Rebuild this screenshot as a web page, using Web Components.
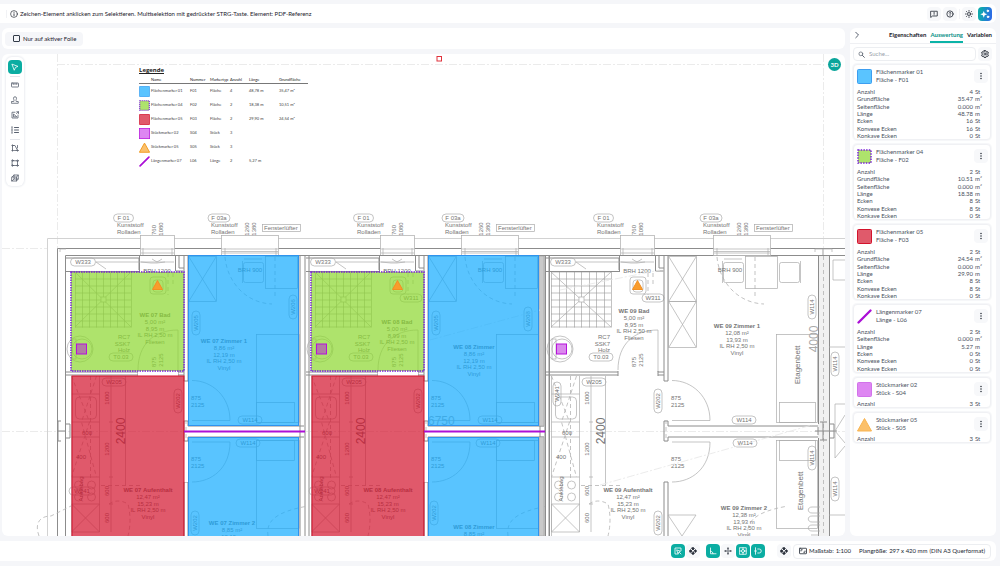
<!DOCTYPE html>
<html lang="de">
<head>
<meta charset="utf-8">
<meta name="viewport" content="width=device-width, initial-scale=1">
<title>Planauswertung</title>
<style>
  body { margin: 0; background: #f5f6f9; color: #4a515e; font: 6px/8px Lato, "Open Sans", sans-serif; }
</style>
</head>
<body>
<plan-app></plan-app>
<script>
const svg = (body, size = 8) => `<svg viewBox="0 0 16 16" width="${size}" height="${size}" fill="none" stroke="currentColor" stroke-width="1.6" stroke-linecap="round" stroke-linejoin="round" aria-hidden="true">${body}</svg>`;
const four = '<path d="M8 .5l2.7 2.8L8 6 5.300 3.300zM8 10l2.700 2.700L8 15.500l-2.700-2.800zM.5 8l2.800-2.700L6 8l-2.700 2.700zM10 8l2.700-2.700L15.500 8l-2.800 2.700z" fill="currentColor"/>';
const ICONS = {
  info: '<circle cx="8" cy="8" r="6.800" stroke-width="1.300"/><path d="M8 7.500v4M8 4.500v.3"/>',
  feedback: '<path d="M2 2.500h12.500v9.500H5L2 14.500zM8.200 4.500v3M8.200 9.600v.2"/>',
  help: '<circle cx="8" cy="8" r="6.300"/><path d="M6.300 6.300c.2-2.500 3.500-2 3.400 0C9.600 7.600 8.100 7.600 8.100 9M8.100 11.300v.2"/>',
  sun: '<circle cx="8" cy="8" r="3"/><path d="M8 .8v1.700M8 13.500v1.700M.8 8h1.700M13.500 8h1.700M2.900 2.900l1.200 1.200M11.900 11.900l1.200 1.200M2.900 13.100l1.200-1.200M11.900 4.100l1.200-1.200"/>',
  spark: '<path d="M6 3L7.500 6.800 11.500 8.300 7.500 9.800 6 14 4.500 9.800.5 8.300 4.500 6.800z" fill="currentColor" stroke="none"/><circle cx="12.500" cy="3" r="1.300" fill="currentColor"/><circle cx="12.800" cy="12.500" r="1.300" fill="currentColor"/>',
  cursor: '<path d="M2.500 2.500l11.500 4.300-5 2-2.200 5z"/>',
  ruler: '<rect x="1" y="4" width="14" height="8" rx="1"/><path d="M4.500 4.500v2.500M8 4.500v2.500M11.500 4.500v2.500"/>',
  stamp: '<path d="M1.500 14.500h13v-3.500H10.500C9 8 11 7 11 4.500a3 3 0 0 0-6 0C5 7 7 8 5.500 11h-4z"/>',
  areaicon: '<path d="M14 8v6H2V2.500h6M5 11V6l6 5zM11 5l4-3.500M11.500 1.500H15V5"/>',
  list: '<path d="M7 3h8M7 8h8M7 13h8M2 1.500v3M2 6.500v3M2 11.500v3" stroke-width="2"/>',
  polyline: '<path d="M3 13V3h5l5 10H7"/><circle cx="3" cy="3" r="1.300"/><circle cx="13" cy="13" r="1.300"/><circle cx="3" cy="13" r="1.300"/><path d="M13 3v5"/>',
  polygon: '<path d="M3 3.500h10v9.500H3z"/><circle cx="3" cy="3" r="1.500"/><circle cx="13" cy="3.500" r="1.500"/><circle cx="3" cy="13" r="1.500"/><circle cx="13" cy="13" r="1.500"/>',
  cube: '<path d="M2 6l4-4h8.500v8L11 14H2zM2 6h9v8M11 6l3.500-4M6 2v8h8M2 14l4-4"/>',
  chevron: '<path d="M5.500 2.500L11 8l-5.500 5.500" stroke-width="2"/>',
  search: '<circle cx="6.500" cy="6.500" r="4.300"/><path d="M10 10l4.500 4.500" stroke-width="2.200"/>',
  gear: '<circle cx="8" cy="8" r="2.200"/><path d="M6.500 1.300h3l.5 2 1.500.8 2-.6 1.400 2.500-1.400 1.500v1.300l1.400 1.500-1.400 2.500-2-.6-1.500.8-.5 2h-3l-.5-2-1.500-.8-2 .6-1.400-2.500 1.400-1.500V7.500L1.100 6l1.400-2.500 2 .6L6 3.300z" stroke-width="2"/>',
  dots: '<path d="M8 3v.1M8 8v.1M8 13v.1" stroke-width="3"/>',
  select: '<path d="M14 7V2H2v12h6M6 6l7 2.500-3 1.500-1.500 3z"/><path d="M11 11l3 3"/>',
  four,
  angle: '<path d="M3 2v11.500h11M3 8.500c3 0 5 2 5 5"/>',
  cross: '<path d="M8 0l2 3.500H6zM8 16l-2-3.500h4zM0 8l3.500-2v4zM16 8l-3.500 2V6z" fill="currentColor" stroke="none"/><path d="M8 4v2.500M8 9.500v2.500M4 8h2.500M9.500 8h2.500"/>',
  grid: '<rect x="1.500" y="1.500" width="13" height="13"/><circle cx="8" cy="8" r="3"/><path d="M8 1.500V5M8 11v3.500M1.500 8H5M11 8h3.500"/>',
  magnet: '<path d="M3 1.500v13M1 8h4M7.500 4h3a4 4 0 0 1 0 8h-3"/>',
  scale: '<rect x="1" y="2.500" width="14" height="11" rx="1"/><path d="M4 8V5.500h2.500M12 8v2.500H9.500"/>'
};

function define(name, template) {
  customElements.define(name, class extends HTMLElement {
    constructor() {
      super();
      this.attachShadow({ mode: 'open' });
    }
    connectedCallback() {
      if (this.shadowRoot.childNodes.length) return;
      this.shadowRoot.innerHTML = typeof template === 'function' ? template(this) : template;
    }
  });
}

/* Square icon button; kind = plain | soft | active | assist */
define('icon-button', el => `
<style>
  :host { display: block; flex: none; }
  button { box-sizing: border-box; display: flex; align-items: center; justify-content: center; width: 14px; height: 14px; padding: 0; border: 0; border-radius: 4px; background: none; color: #59616f; }
  .soft { background: #f7f8fa; color: #222833; }
  .active { background: #0bada2; color: #fff; }
  .assist { background: linear-gradient(100deg, #0fa9ae 20%, #2c6be6 90%); color: #fff; }
  svg { display: block; }
</style>
<button type="button" class="${el.getAttribute('kind') || 'plain'}" aria-label="${el.getAttribute('label')}">${svg(ICONS[el.getAttribute('icon')], el.getAttribute('size') || 8)}</button>`);

define('top-bar', `
<style>
  :host { display: flex; align-items: center; gap: 2px; box-sizing: border-box; height: 19px; padding: 0 4px 0 6px; background: #fff; border-radius: 0 6px 6px 0; }
  .hint { display: flex; align-items: center; gap: 2px; flex: 1; padding-left: 3px; border-left: 1px solid #f1f2f5; color: #1c222c; white-space: nowrap; }
  i { width: 1px; height: 10px; background: #f1f2f5; }
  svg { display: block; }
</style>
<div class="hint">${svg(ICONS.info)}<span>Zeichen-Element anklicken zum Selektieren. Multiselektion mit gedrückter STRG-Taste. Element: PDF-Referenz</span></div>
<icon-button kind="soft" icon="feedback" label="Feedback"></icon-button>
<icon-button kind="soft" icon="help" label="Hilfe"></icon-button>
<i></i>
<icon-button kind="soft" icon="sun" label="Helligkeit"></icon-button>
<icon-button kind="assist" icon="spark" size="10" label="Assistent"></icon-button>`);

define('option-bar', `
<style>
  :host { display: flex; align-items: center; box-sizing: border-box; height: 21px; padding: 0 3px; background: #fff; border-radius: 6px; }
  label { display: flex; align-items: center; gap: 3px; height: 14px; padding: 0 7px 0 8px; border-radius: 4px; background: #f5f6f9; color: #1c222c; }
  input { appearance: none; box-sizing: border-box; width: 7px; height: 7px; margin: 0; border: 1px solid #333b48; border-radius: 1px; }
</style>
<label><input type="checkbox"><span>Nur auf aktiver Folie</span></label>`);

define('tool-palette', `
<style>
  :host { display: flex; flex-direction: column; align-items: center; box-sizing: border-box; width: 18px; padding: 3px 0 1px; gap: 1px; border-radius: 6px; background: #fff; box-shadow: 0 0 2px 1px #eceef2; }
  i { width: 10px; height: 1px; margin-top: 1px; background: #e4e6eb; }
</style>
<icon-button kind="active" icon="cursor" label="Auswählen"></icon-button><i></i>
<icon-button icon="ruler" label="Länge messen"></icon-button>
<icon-button icon="stamp" label="Stückmarker"></icon-button>
<icon-button icon="areaicon" label="Fläche"></icon-button>
<icon-button icon="list" label="Legende"></icon-button><i></i>
<icon-button icon="polyline" label="Linienzug"></icon-button>
<icon-button icon="polygon" label="Polygon"></icon-button>
<icon-button icon="cube" label="Körper"></icon-button>`);

/* Marker symbol, shared by the legend and the result cards */
const SWATCH = {
  blue: '<rect x=".5" y=".5" width="14" height="14" rx="1" fill="#5ac4ff" stroke="#3d9ef0"/>',
  green: '<rect x="1" y="1" width="13" height="13" fill="#aee36c" stroke="#7a22d8" stroke-width="1.500" stroke-dasharray="1.500 1.200"/>',
  red: '<rect x=".5" y=".5" width="14" height="14" rx="1" fill="#e05a6b" stroke="#d3132c"/>',
  violet: '<rect x=".5" y=".5" width="14" height="14" rx="1" fill="#de86f2" stroke="#d273ea"/>',
  purple: '<rect x=".5" y=".5" width="14" height="14" fill="#de86f2" stroke="#b613dc"/>',
  triangle: '<path d="M7.500 1.500L14.500 14H.5z" fill="#fbc06a" stroke="#f9b550"/>',
  orange: '<path d="M7.500 1.500L14.500 14H.5z" fill="#fbc06a" stroke="#f09a22" stroke-width="1.300"/>',
  line: '<path d="M1.500 13.500l12-12" stroke="#ab0fd6" stroke-width="2.300" stroke-linecap="round"/>'
};
define('marker-swatch', el => `
<style>:host { display: block; flex: none; } svg { display: block; }</style>
<svg viewBox="0 0 15 15" width="${el.getAttribute('size') || 15}" height="${el.getAttribute('size') || 15}" fill="none" aria-hidden="true">${SWATCH[el.getAttribute('type')]}</svg>`);

define('plan-legend', () => {
  const rows = [
    ['blue', 'Flächenmarker 01', 'F01', 'Fläche', '4', '48,78 m', '35,47 m²'],
    ['green', 'Flächenmarker 04', 'F02', 'Fläche', '2', '18,38 m', '10,51 m²'],
    ['red', 'Flächenmarker 05', 'F03', 'Fläche', '2', '29,90 m', '24,54 m²'],
    ['purple', 'Stückmarker 02', 'S04', 'Stück', '3', '', ''],
    ['orange', 'Stückmarker 05', 'S05', 'Stück', '3', '', ''],
    ['line', 'Längenmarker 07', 'L06', 'Länge', '2', '5,27 m', '']
  ];
  return `
<style>
  :host { display: block; color: #222; font: 4px/6px Lato, sans-serif; }
  h2 { display: inline-block; margin: 0 0 2px; border-bottom: 1px solid #222; font: 700 6px/6px "Open Sans", sans-serif; }
  table { table-layout: fixed; width: 169px; border-collapse: collapse; }
  th { height: 7px; padding: 0; border-bottom: 1px solid #777; text-align: left; font-weight: 400; }
  td { height: 14px; padding: 0; color: #444; white-space: nowrap; }
</style>
<h2>Legende</h2>
<table>
  <colgroup><col style="width:12px"><col style="width:39px"><col style="width:20px"><col style="width:20px"><col style="width:19px"><col style="width:30px"><col></colgroup>
  <thead><tr><th></th><th>Name</th><th>Nummer</th><th>Markertyp</th><th>Anzahl</th><th>Länge</th><th>Grundfläche</th></tr></thead>
  <tbody>${rows.map(r => `<tr><td><marker-swatch type="${r[0]}" size="11"></marker-swatch></td>${r.slice(1).map(c => `<td>${c}</td>`).join('')}</tr>`).join('')}</tbody>
</table>`;
});

/* Floor plan drawing in sheet coordinates */
function drawPlan() {
  const o = [];
  const L = (d, cls = 'l') => o.push(`<path class="${cls}" d="${d}"/>`);
  const R = (x, y, w, h, cls = 'l', rx = 0) => o.push(`<rect class="${cls}" x="${x}" y="${y}" width="${w}" height="${h}" rx="${rx}"/>`);
  const T = (x, y, s, cls = '') => o.push(`<text class="${cls}" x="${x}" y="${y}">${s}</text>`);
  const V = (x, y, s, cls = '') => o.push(`<text class="m ${cls}" transform="translate(${x} ${y}) rotate(-90)">${s}</text>`);
  const pill = (cx, cy, s, w = 24) => { R(cx - w / 2, cy - 4, w, 8, 'l', 4); T(cx, cy + 2, s, 'm'); };
  const vpill = (cx, cy, s) => { R(cx - 4, cy - 12, 8, 24, 'l', 4); V(cx + 2, cy, s); };
  const block = (cx, y, lines) => lines.forEach((s, i) => T(cx, y + i * 7 - (i > 2 ? 1 : 0), s, i ? 'm' : 'm b'));

  /* sheet frame and axes */
  L('M57.500 54V248M57 64.500H824M823.500 54V248M2 248.500H47M2 431.500H845', 'd');
  L('M47.500 536V238.500H845', 'f');
  L('M57.500 536V248.500H845M65.500 536V255.500H549M549 255.500H845', 'w');
  L('M60 252v-3h6M815 252v-3h8v6v-6h9v3', 'l');
  L('M58 421v20M58 431h7M61 421h-4M61 441h-4M66 424h4v14h-4', 'w');
  L('M39 536c-5 -14 2 -20 12 -20l20 -10', 'd k');

  const labels = [208, 442, 700];
  for (let u = 0; u < 3; u++) {
    const x = u * 240, r = u === 2 ? 492 : x, n = '0' + (7 + u), c = u === 2;
    /* windows with their captions */
    R(140.5 + x, 235.5, 34, 20, 'l p'); L(`M${141 + x} 249h33M${141 + x} 253h33M${143 + x} 248v8M${172 + x} 248v8`);
    R(221.5 + r, 235.5, 57, 20, 'l p'); L(`M${222 + r} 249h56M${222 + r} 251.500h56M${222 + r} 253h56M${225 + r} 248v8M${276 + r} 248v8`);
    pill(123.5 + x, 218, 'F 01', 20); T(117 + x, 227, 'Kunststoff'); T(117 + x, 234, 'Rolladen');
    V(156 + x, 230, '760'); V(163 + x, 229, '1080');
    const fx = labels[u];
    pill(fx + 11, 218, 'F 03a', 22); T(fx + 3, 227, 'Kunststoff'); T(fx + 3, 234, 'Rolladen');
    V(fx + 41, 229, '1260'); V(fx + 48, 229, '1380');
    R(fx + 54.5, 224.5, 38, 7); T(fx + 56, 230, 'Fensterlüfter');
    /* bathroom niche */
    L(`M${66 + x} 255.500h118M${66 + x} 258h73v12M${139.500 + x} 256v15M${66 + x} 271.500h74M${175.500 + x} 256v15h8M${179 + x} 256v12h5`, 'w');
    L(`M${96 + x} 262h78M${96 + x} 262l10 7M${141 + x} 262l10 1 6 0 8-1M${152 + x} 259l5 3 5-3`);
    pill(83 + x, 262, 'W333', 25); T(157 + x, 273, 'BRH 1200', 'm');
    /* shower tray */
    const sx = c ? 551 : 75 + x, sw = c ? 60 : 56;
    for (let i = 0; i <= 8; i++) L(`M${sx + Math.round(i * sw / 8)}.500 272v55.500M${sx} ${272 + i * 7 - (i === 8 ? 1 : 0)}h${sw}`, 'g');
    L(`M${sx} 272l${sw} 55M${sx} 327l${sw} -55`); R(sx + sw / 2 - 2, 297, 5, 5, 'l p');
    /* basin, toilet, bath door */
    R(150 + x, 277, 16, 17, 'l', 3); R(153 + x, 280, 10, 12, 'l', 3);
    o.push(`<circle class="l" cx="${82 + x}" cy="349" r="10"/><circle class="l" cx="${80 + x}" cy="349" r="13"/>`);
    R(72 + x, 339, 4, 20);
    T(130 + x, 339, 'RC7', 'e'); T(130 + x, 346, 'SSK7', 'e'); T(130 + x, 352, 'Holz', 'e'); pill(121 + x, 357, 'T0.03', 24);
    V(156 + x, 362, '875'); V(163 + x, 360, '2125');
    L(`M${178 + x} 330v42M${178 + x} 330c-24 0 -40 14 -40 40`);
    if (u) pill((c ? 653 : 411), 298, 'W311', 22);
    L(`M${168 + x} 273v22M${173 + x} 273v14`, 'd k');
    /* walls round bathroom and hallway */
    L(`M${66 + x} 372h72M${66 + x} 375h72M${178 + x} 372h6M${178 + x} 375h6M${138 + x} 371v5M${178 + x} 371v5`, 'w');
    L(`M${184 + x} 256v125M${188 + x} 256v125h-4M${184 + x} 421h4v5h${c ? 150 : 116}M${184 + x} 421v20h4v-4h${c ? 150 : 116}M${184 + x} 482h4v54M${184 + x} 482v54`, 'w');
    L(`M${186 + x} 420v22`, 'd k');
    if (!c) L(`M${300 + x} 256v280M${305 + x} 256v280M${309 + x} 256v280`, 'w');
    /* kitchen */
    const kx = 71.5 + x;
    L(`M${kx} 376v160M${kx + 28} 376v128M${kx} 394h28M${kx} 422h28M${kx} 437h28M${kx} 477h28M${kx} 504h28v28h-28zl28 28m0 -28l-28 28`);
    R(kx + 4, 397, 21, 22, 'l', 4);
    L(`M${kx} 376l18 46 -18 55M${kx + 25} 376l-15 46 15 55M${kx + 19} 376v102`, 'd k');
    [[7, 485], [20, 485], [7, 497], [20, 497]].forEach(p => o.push(`<circle class="l" cx="${kx + p[0]}" cy="${p[1]}" r="4"/>`));
    L(`M${111 + x} 376v156M${109 + x} 422h4M${109 + x} 477h4M${109 + x} 504h4M${125.500 + x} 376v109`, 'l');
    L(`M${101 + x} 485.500h42M${109 + x} 504c6 -4 12 -4 19 0q4 16 0 32`, 'd k');
    T(87 + x, 435, '600', 'm'); T(81 + x, 459, '400', 'm');
    V(109 + x, 398, '1000'); V(109 + x, 449, '1200'); V(109 + x, 491, '600'); V(109 + x, 518, '600');
    V(83 + x, 489, 'Anklebag'); V(125 + x, 431, '2400', 'x');
    pill(114 + x, 382, 'W205'); vpill(178 + x, 401, 'W202');
    if (!c) pill(82 + x, 491, 'W241', 26); else vpill(557, 394, 'W241');
    block(148 + x, 492, [`WE ${n} Aufenthalt`, '12,47 m²', '15,23 m', 'IL RH 2,50 m', 'Vinyl']);
    /* rooms */
    if (!c) { R(188.5 + x, 256.5, 28, 45); L(`M${189 + x} 257l27 44M${216 + x} 257l-27 44`); }
    if (c) { R(668.5, 256.5, 28, 45); R(668.5, 301.5, 28, 46); L('M669 257l27 44M696 257l-27 44M669 302l27 45M696 302l-27 45'); }
    const q = c ? 480 : x;
    R(265.5 + q, 256.5, 32, 32); R(243.5 + q, 262.5, 20, 20, 'l', 2); L(`M${242.500 + q} 261v22M${244 + q} 259h18`);
    if (c) { R(779.5, 262.500, 20, 20, 'l', 2); L('M800.500 261v22'); }
    L(`M${225 + r} 257c2 24 20 46 47 47M${275 + q} 257v42`, 'd k');
    T(250 + q, 272, 'BRH 900', 'm');
    const bx = (c ? 776.5 : 256.5 + x), bw = c ? 41 : 43;
    R(bx, 334.5, bw, 88); R(bx + (c ? 3 : 0), 402.5, bw - 5, 20); R(bx, 440.5, bw, 88); R(bx + (c ? 3 : 0), 440.5, bw - 5, 20);
    L(`M${192 + x} 420.500h38c0 -24 -18 -40 -38 -40M${192 + x} 442h38c0 26 -18 40 -38 40`);
    [[400, '875'], [407, '2125'], [461, '875'], [468, '2125']].forEach(p => T(191 + x, p[0], p[1]));
    pill(c ? 744 : 250 + x, 420, 'W114'); pill(c ? 745 : 248 + x, 443, 'W114');
    if (!c) { vpill(196 + x, 323, 'W205'); vpill(u ? 528 : 293, u ? 319 : 307, u ? 'W208' : 'W206'); }
    vpill(u === 1 ? 434 : 195 + (c ? 463 : 0), u === 1 ? 513 : 523, 'W202');
    L(`M${268 + q} 536c-2 -14 6 -24 40 -30`, 'd k');
  }
  block(155, 317, ['WE 07 Bad', '5,00 m²', '8,95 m', 'IL RH 2,50 m', 'Fliesen']);
  block(397, 324, ['WE 08 Bad', '5,00 m²', '8,99 m', 'IL RH 2,50 m', 'Fliesen']);
  block(634, 313, ['WE 09 Bad', '5,00 m²', '8,95 m', 'IL RH 2,50 m', 'Fliesen']);
  block(224, 343, ['WE 07 Zimmer 1', '8,86 m²', '12,19 m', 'IL RH 2,50 m', 'Vinyl']);
  block(474, 349, ['WE 08 Zimmer', '8,86 m²', '12,19 m', 'IL RH 2,50 m', 'Vinyl']);
  block(737, 328, ['WE 09 Zimmer 1', '12,08 m²', '13,93 m', 'IL RH 2,50 m', 'Vinyl']);
  block(232, 525, ['WE 07 Zimmer 2', '8,85 m²', '12,19 m']);
  block(474, 529, ['WE 08 Zimmer', '8,85 m²']);
  block(744, 510, ['WE 09 Zimmer 2', '12,38 m²', '13,93 m', 'IL RH 2,50 m', 'Vinyl']);

  /* party walls */
  R(539, 256, 5, 170, 'h'); R(539, 437, 5, 99, 'h');
  L('M549.500 256v280M545.500 256v280', 'w');
  R(818, 256, 11, 280, 'h2');
  L('M818.500 256v168M829.500 256v280M818.500 438v98', 'w');
  L('M823.500 256v280', 'd k');
  L('M815 431h22M818 427v8M823 422v18M820 422h7M820 440h7M830 424h4v14h-4', 'w');
  L('M845 260h-12v20h12M829 347h16M845 404h-10v54l10 -12M829 515h16M845 415l-10 16 10 12M668 515h28l-14 21z', 'l');
  L('M820 507h-8c-5 0 -5 6 0 6h8M820 516h-8c-5 0 -5 6 0 6h8M820 525h-8c-5 0 -5 6 0 6h8M811 535h8', 'l');
  vpill(812, 307, 'W114'); vpill(835, 364, 'W114'); vpill(812, 458, 'W114'); vpill(835, 489, 'W114');
  V(818, 339, '4000', 'x y'); V(800, 365, 'Etagenbett', 'z'); V(803, 491, 'Etagenbett', 'z');
  T(428, 425, '6750', 'x y');
  L('M600 485L812 425M430 340L540 310M560 290l100 -20', 'd');

  /* measured areas, lengths and pieces */
  const fills = [];
  for (const x of [0, 240]) {
    fills.push(`<rect x="${138 + x}" y="371" width="40" height="5" fill="#fff"/><rect x="${184 + x}" y="382" width="4" height="38" fill="#fff"/><rect x="${184 + x}" y="443" width="4" height="39" fill="#fff"/>`);
    fills.push(`<rect class="blue" x="${188.5 + x}" y="255.500" width="110" height="170"/><rect class="blue" x="${188.500 + x}" y="437.500" width="110" height="105"/>`);
    fills.push(`<rect class="green" x="${71 + x}" y="272" width="113" height="99"/><rect class="red" x="${72 + x}" y="376" width="112" height="170"/>`);
    fills.push(`<path class="len" d="M${184 + x} 431.500h121"/>`);
  }
  for (const x of [0, 240, 480]) {
    fills.push(`<path class="tri" d="M${157.5 + x} 280.500l5 9h-10z"/><rect class="pc" x="${76.500 + x}" y="344" width="10" height="10"/>`);
  }
  return o.join('') + fills.join('') + '<rect x="437" y="56.500" width="4.500" height="4.500" fill="#fff" stroke="#e0323c"/>';
}

define('plan-canvas', () => `
<style>
  :host { position: relative; display: block; overflow: hidden; background: #fff; border-radius: 6px; }
  .plan { position: absolute; inset: 0; width: 100%; height: 100%; font: 6px "Liberation Sans", sans-serif; }
  text { fill: #747474; }
  .m { text-anchor: middle; } .e { text-anchor: end; } .b { font-weight: bold; }
  .x { font-size: 12px; } .y { fill: #a9a9a9; } .z { font-size: 8px; }
  path, rect, circle { fill: none; }
  .l { stroke: #acacac; stroke-width: .7; } .p { fill: #fff; }
  .g { stroke: #999; stroke-width: .6; }
  .w { stroke: #8c8c8c; stroke-width: 1; }
  .f { stroke: #d2d2d2; }
  .d { stroke: #e6e6e6; stroke-width: .8; stroke-dasharray: 8 2 2 2; } .k { stroke: #b4b4b4; stroke-dasharray: 4 3; }
  .h { fill: #c9c9c9; stroke: #999; stroke-width: .5; } .h2 { fill: #f1f1f1; }
  .blue { fill: #13abff; fill-opacity: .7; stroke: #2f93ee; }
  .green { fill: #8bd72d; fill-opacity: .7; stroke: #7a22d8; stroke-width: 1.500; stroke-dasharray: 1.500 1; }
  .red { fill: #d3132c; fill-opacity: .7; stroke: #d3132c; }
  .len { stroke: #ab0fd6; stroke-width: 2; }
  .tri { fill: #f99c2c; stroke: #f29022; }
  .pc { fill: #b613dc; fill-opacity: .5; stroke: #b613dc; }
  rect[fill="#fff"] { fill: #fff; }
  tool-palette { position: absolute; left: 4px; top: 3px; }
  plan-legend { position: absolute; left: 137px; top: 13px; }
  button { position: absolute; right: 4px; top: 4px; width: 13px; height: 13px; padding: 0; border: 0; border-radius: 50%; background: #0ba59b; color: #fff; font: 700 6px/13px Lato, sans-serif; }
</style>
<svg class="plan" role="img" aria-label="Grundriss"><g transform="translate(-2 -54)">${drawPlan()}</g></svg>
<plan-legend></plan-legend>
<tool-palette></tool-palette>
<button type="button">3D</button>`);

/* One marker with its measured quantities; data = label|number|unit;... */
define('marker-card', el => {
  const rows = el.getAttribute('data').split(';').map(r => r.split('|'));
  const height = { 7: 51, 6: 44, 1: 7 }[rows.length];
  return `
<style>
  :host { display: block; box-sizing: border-box; padding: 2px 2px 0 3px; border: 1px solid #f0f1f4; border-radius: 4px; box-shadow: 0 0 1px 1px #f6f7f9; background: #fff; }
  header { display: flex; align-items: center; gap: 4px; height: 18px; margin-bottom: ${rows.length > 1 ? 3 : 2}px; }
  .name { flex: 1; white-space: nowrap; }
  table { width: 100%; height: ${height}px; border-collapse: collapse; line-height: 7px; }
  th, td { padding: 0; font-weight: 400; text-align: left; }
  .n { text-align: right; }
  .u { width: 13px; padding-left: 2px; }
</style>
<header><marker-swatch type="${el.getAttribute('type')}"></marker-swatch><div class="name"><slot></slot></div><icon-button kind="soft" icon="dots" size="8" label="Mehr"></icon-button></header>
<table>${rows.map(r => `<tr><th scope="row">${r[0]}</th><td class="n">${r[1]}</td><td class="u">${r[2]}</td></tr>`).join('')}</table>`;
});

define('result-panel', () => {
  const full = (n, g, s, l, e, v, k) => `Anzahl|${n}|St;Grundfläche|${g}|m²;Seitenfläche|${s}|m²;Länge|${l}|m;Ecken|${e}|St;Konvexe Ecken|${v}|St;Konkave Ecken|${k}|St`;
  return `
<style>
  :host { display: block; background: #fff; border-radius: 6px; overflow: hidden; }
  nav { display: flex; align-items: stretch; justify-content: flex-end; gap: 4px; height: 15px; padding-right: 4px; border-bottom: 1px solid #eff0f3; }
  nav icon-button { margin-right: auto; }
  [role=tab] { padding: 0; border: 0; border-bottom: 2px solid transparent; background: none; color: #1c222c; font: 700 6px/8px Lato, sans-serif; }
  [aria-selected=true] { color: #078f86; border-color: #0bb3a7; }
  .find { display: flex; align-items: center; gap: 2px; padding: 3px 4px 3px 3px; }
  label { display: flex; align-items: center; gap: 4px; flex: 1; height: 12px; padding: 0 4px; border: 1px solid #eceef1; border-radius: 4px; }
  input { flex: 1; min-width: 0; padding: 0; border: 0; outline: 0; background: none; font: 6px/8px Lato, sans-serif; }
  input::placeholder { color: #9aa0aa; }
  svg { display: block; color: #59616f; }
  .list { display: flex; flex-direction: column; gap: 4px; padding: 0 5px 0 3px; }
</style>
<nav role="tablist">
  <icon-button icon="chevron" label="Einklappen"></icon-button>
  <button type="button" role="tab" aria-selected="false">Eigenschaften</button>
  <button type="button" role="tab" aria-selected="true">Auswertung</button>
  <button type="button" role="tab" aria-selected="false">Variablen</button>
</nav>
<div class="find"><label>${svg(ICONS.search, 7)}<input type="text" placeholder="Suche..." aria-label="Suche"></label><icon-button kind="soft" icon="gear" label="Einstellungen"></icon-button></div>
<div class="list">
  <marker-card type="blue" data="${full(4, '35.47', '0.000', '48.78', 16, 16, 0)}">Flächenmarker 01<br>Fläche - F01</marker-card>
  <marker-card type="green" data="${full(2, '10.51', '0.000', '18.38', 8, 8, 0)}">Flächenmarker 04<br>Fläche - F02</marker-card>
  <marker-card type="red" data="${full(2, '24.54', '0.000', '29.90', 8, 8, 0)}">Flächenmarker 05<br>Fläche - F03</marker-card>
  <marker-card type="line" data="Anzahl|2|St;Seitenfläche|0.000|m²;Länge|5.27|m;Ecken|0|St;Konvexe Ecken|0|St;Konkave Ecken|0|St">Längenmarker 07<br>Länge - L06</marker-card>
  <marker-card type="violet" data="Anzahl|3|St">Stückmarker 02<br>Stück - S04</marker-card>
  <marker-card type="triangle" data="Anzahl|3|St">Stückmarker 05<br>Stück - S05</marker-card>
</div>`;
});

define('status-bar', `
<style>
  :host { display: flex; align-items: center; justify-content: flex-end; box-sizing: border-box; height: 20px; padding-right: 5px; gap: 1px; background: #fff; border-radius: 0 6px 6px 0; }
  i { width: 1px; height: 10px; margin-right: 3px; }
  .wide { margin-left: 11px; }
  .sheet { display: flex; align-items: center; gap: 2px; box-sizing: border-box; height: 15px; margin-left: 1px; padding: 0 5px; border: 1px solid #eceef1; border-radius: 4px; color: #222833; white-space: nowrap; }
  .size { margin-left: 6px; }
  svg { display: block; }
</style>
<icon-button kind="active" icon="select" label="Auswahlmodus"></icon-button>
<icon-button kind="soft" icon="four" label="Verschieben"></icon-button><i></i>
<icon-button kind="active" icon="angle" label="Winkelfang"></icon-button>
<icon-button kind="soft" icon="cross" label="Fadenkreuz"></icon-button>
<icon-button kind="active" icon="grid" label="Rasterfang"></icon-button>
<icon-button kind="active" icon="magnet" label="Objektfang"></icon-button>
<icon-button class="wide" kind="soft" icon="four" label="Ansicht"></icon-button>
<div class="sheet">${svg(ICONS.scale)}<span>Maßstab:</span><span>1:100</span><span class="size">Plangröße:</span><span>297 x 420 mm</span><span>(DIN A3 Querformat)</span></div>`);

define('plan-app', `
<style>
  :host { display: flex; flex-direction: column; gap: 5px; box-sizing: border-box; min-height: 100vh; padding: 4px 4px 5px 0; }
  main { display: flex; flex: 1; gap: 5px; padding-left: 2px; }
  section { display: flex; flex: 1; flex-direction: column; gap: 5px; min-width: 0; }
  plan-canvas { flex: 1; }
  result-panel { flex: none; width: 146px; }
</style>
<top-bar></top-bar>
<main>
  <section><option-bar></option-bar><plan-canvas></plan-canvas></section>
  <result-panel></result-panel>
</main>
<status-bar></status-bar>`);
</script>
</body>
</html>
